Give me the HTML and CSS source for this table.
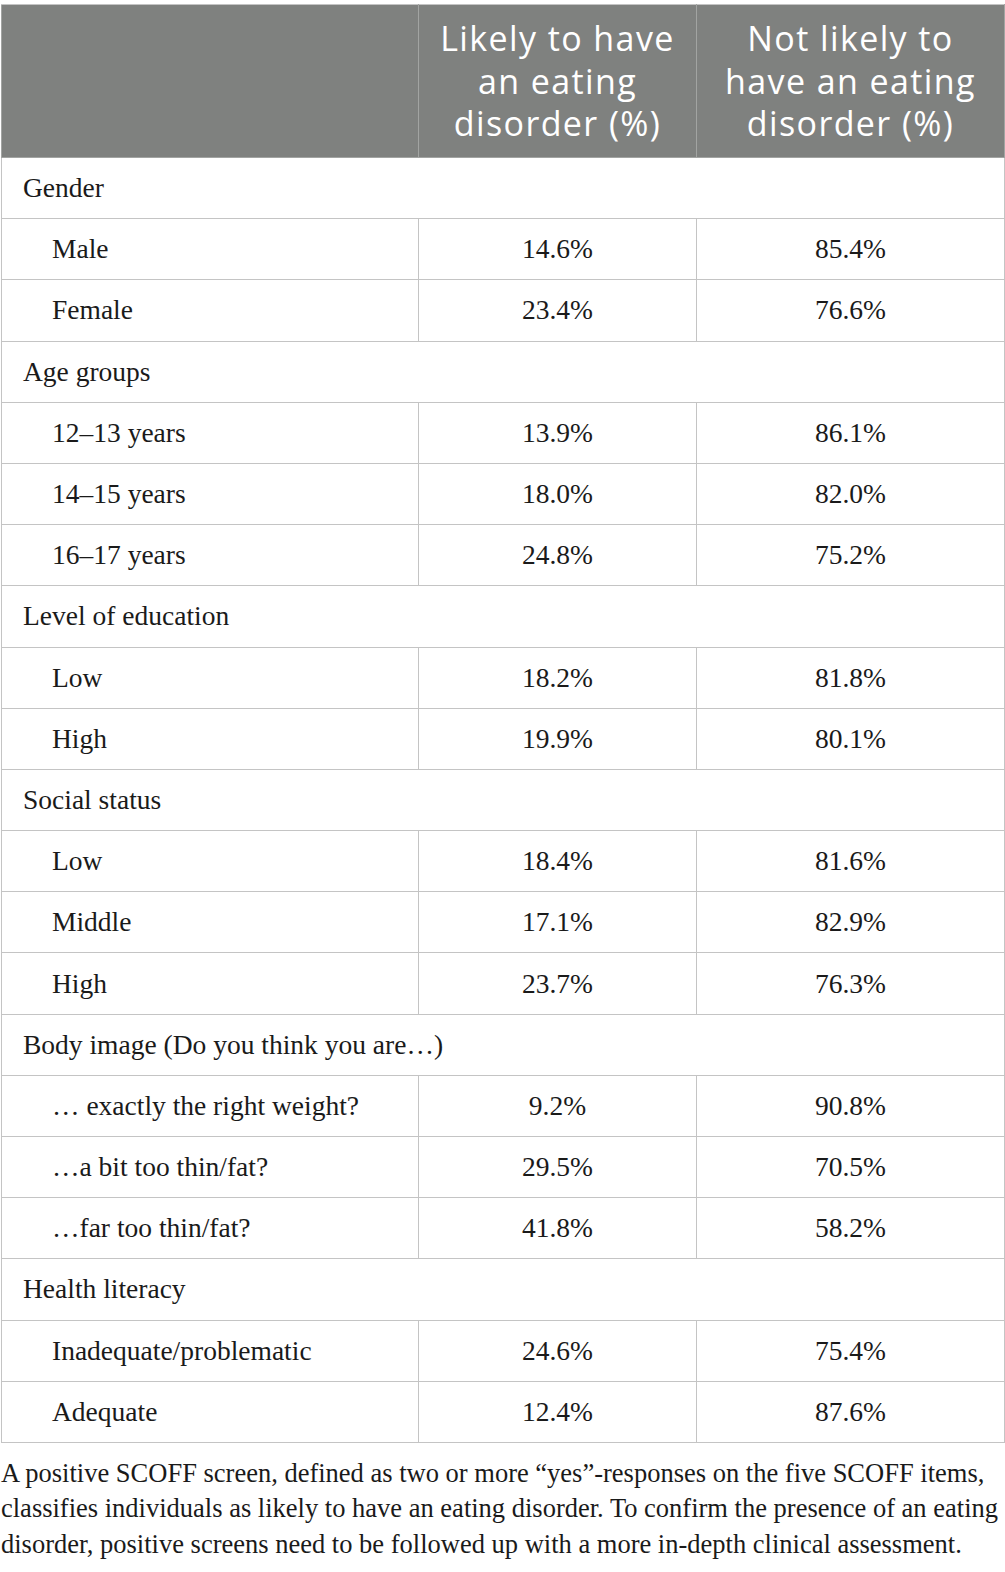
FILE: index.html
```html
<!DOCTYPE html>
<html lang="en">
<head>
    <meta charset="UTF-8">
    <title>Eating disorder screening by group</title>
    <link rel="stylesheet" href="styles.css">
</head>
<body>
    <div class="table-wrap">
        <table class="data-table">
            <colgroup>
                <col class="col-label">
                <col class="col-likely">
                <col class="col-not">
            </colgroup>
            <thead>
                <tr>
                    <th></th>
                    <th>Likely to have an eating disorder (%)</th>
                    <th>Not likely to have an eating disorder (%)</th>
                </tr>
            </thead>
            <tbody>
                <tr class="group"><td colspan="3">Gender</td></tr>
                <tr><td class="sub">Male</td><td>14.6%</td><td>85.4%</td></tr>
                <tr><td class="sub">Female</td><td>23.4%</td><td>76.6%</td></tr>

                <tr class="group"><td colspan="3">Age groups</td></tr>
                <tr><td class="sub">12–13 years</td><td>13.9%</td><td>86.1%</td></tr>
                <tr><td class="sub">14–15 years</td><td>18.0%</td><td>82.0%</td></tr>
                <tr><td class="sub">16–17 years</td><td>24.8%</td><td>75.2%</td></tr>

                <tr class="group"><td colspan="3">Level of education</td></tr>
                <tr><td class="sub">Low</td><td>18.2%</td><td>81.8%</td></tr>
                <tr><td class="sub">High</td><td>19.9%</td><td>80.1%</td></tr>

                <tr class="group"><td colspan="3">Social status</td></tr>
                <tr><td class="sub">Low</td><td>18.4%</td><td>81.6%</td></tr>
                <tr><td class="sub">Middle</td><td>17.1%</td><td>82.9%</td></tr>
                <tr><td class="sub">High</td><td>23.7%</td><td>76.3%</td></tr>

                <tr class="group"><td colspan="3">Body image (Do you think you are…)</td></tr>
                <tr><td class="sub">… exactly the right weight?</td><td>9.2%</td><td>90.8%</td></tr>
                <tr><td class="sub">…a bit too thin/fat?</td><td>29.5%</td><td>70.5%</td></tr>
                <tr><td class="sub">…far too thin/fat?</td><td>41.8%</td><td>58.2%</td></tr>

                <tr class="group"><td colspan="3">Health literacy</td></tr>
                <tr><td class="sub">Inadequate/problematic</td><td>24.6%</td><td>75.4%</td></tr>
                <tr><td class="sub">Adequate</td><td>12.4%</td><td>87.6%</td></tr>
            </tbody>
        </table>
        <p class="table-note">A positive SCOFF screen, defined as two or more “yes”-responses on the five SCOFF items, classifies individuals as likely to have an eating disorder. To confirm the presence of an eating disorder, positive screens need to be followed up with a more in-depth clinical assessment.</p>
    </div>
</body>
</html>
```

FILE: styles.css
```css
body {
    margin: 0;
    background-color: #fff;
    color: #1a1a1a;
    font-family: "Liberation Serif", "Times New Roman", serif;
}
.table-wrap {
    width: 1004px;
    padding: 4px 0 0 1px;
}
.data-table {
    width: 1003px;
    border-collapse: collapse;
    table-layout: fixed;
}
.col-label { width: 417px; }
.col-likely { width: 278px; }
.col-not { width: 308px; }
.data-table th {
    background-color: #7f817f;
    color: #fff;
    font-family: "Open Sans", sans-serif;
    font-weight: normal;
    font-size: 34px;
    letter-spacing: 1.4px;
    line-height: 42.5px;
    height: 152px;
    padding: 0 16px;
    text-align: center;
    vertical-align: middle;
    border: 1.5px solid #a2a4a2;
    border-top-color: #c4c4c4;
}
.data-table td {
    height: 61.2px;
    padding: 0;
    box-sizing: border-box;
    font-size: 27.5px;
    text-align: center;
    vertical-align: middle;
    border: 1.5px solid #c4c4c4;
}
.data-table .group td {
    text-align: left;
    padding-left: 21px;
}
.data-table td.sub {
    text-align: left;
    padding-left: 50px;
}
.table-note {
    margin: 13px 0 0 0;
    font-size: 26.5px;
    line-height: 35.5px;
}
```
